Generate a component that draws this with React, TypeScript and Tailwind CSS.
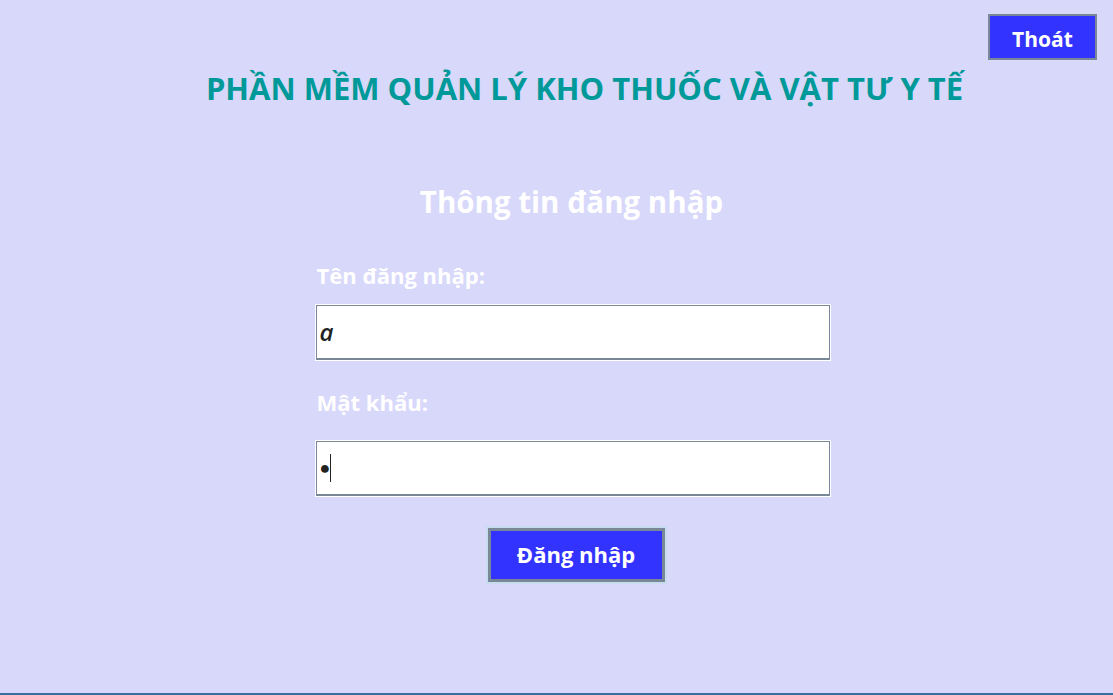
const font = { fontFamily: '"Open Sans", "Noto Sans", sans-serif' };

const Field: React.FC<{ label: string; gap: number; children: React.ReactNode }> = ({ label, gap, children }) => {
  return (
    <div className="flex flex-col">
      <label className="text-[22px] font-bold text-white leading-none h-[28px] pl-[2px]">{label}</label>
      <div
        className={
          (gap === 12 ? "mt-[12px] " : "mt-[21px] ") + "w-[516px] h-[57px] bg-white p-[1px]"
        }
      >
        <div className="w-full h-full bg-white border-l border-t border-r border-[#7a8796] border-b-2 flex items-center px-[3px]">
          {children}
        </div>
      </div>
    </div>
  );
};

export default function App() {
  return (
    <div style={font} className="w-[1113px] h-[695px] bg-[#d8d8fa] flex flex-col overflow-hidden">
      <div className="flex justify-end pt-[14px] pr-[16px]">
        <button className="w-[109px] h-[46px] pt-[5px] bg-[#3333ff] border-2 border-[#7a8796] text-white text-[21px] font-bold">
          Thoát
        </button>
      </div>
      <h1 className="mt-[13px] text-center text-[31px] font-bold text-[#009999] pl-[56px] leading-none">
        PHẦN MỀM QUẢN LÝ KHO THUỐC VÀ VẬT TƯ Y TẾ
      </h1>
      <h2 className="mt-[83px] text-center text-[29.5px] font-bold text-white leading-none pl-[30px]">
        Thông tin đăng nhập
      </h2>
      <div className="mt-[47px] flex flex-col items-center pl-[32px] gap-[30px]">
        <Field label="Tên đăng nhập:" gap={12}>
          <span className="text-[24px] italic font-semibold text-[#222]">a</span>
        </Field>
        <Field label="Mật khẩu:" gap={21}>
          <span className="text-[18px] text-[#222]">●</span>
          <span className="w-[1px] h-[28px] bg-[#222]" />
        </Field>
      </div>
      <div className="mt-[31px] flex justify-center pl-[39px]">
        <button className="w-[177px] h-[54px] bg-[#3333ff] border-[3px] border-[#7a8796] outline outline-2 outline-[#c8dcf0] text-white text-[22px] font-bold">
          Đăng nhập
        </button>
      </div>
      <div className="flex-1" />
      <div className="h-[2px] bg-[#3a6ea5]" />
    </div>
  );
}
